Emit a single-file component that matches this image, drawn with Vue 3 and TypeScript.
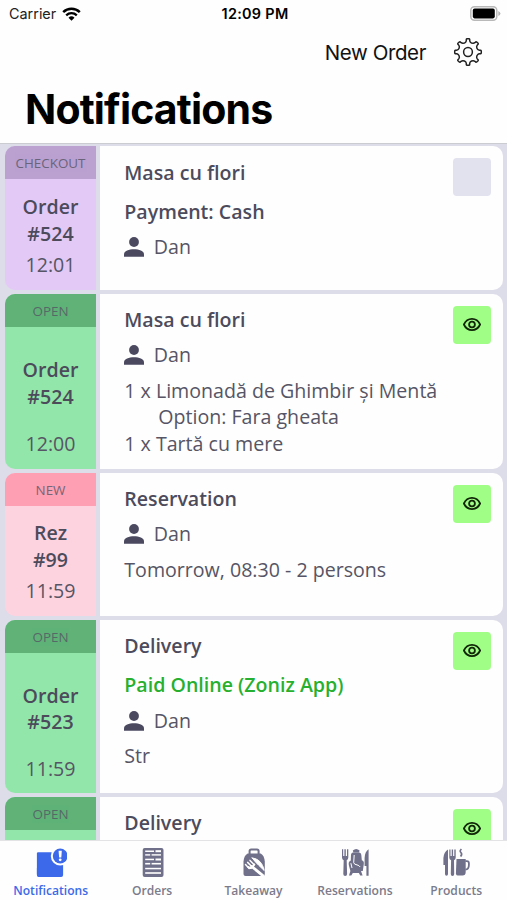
<script setup lang="ts">
interface Line {
  text: string
  indent?: boolean
}
interface Card {
  tone: 'checkout' | 'open' | 'new'
  tag: string
  kind?: string
  number?: string
  time?: string
  title: string
  note?: string
  paid?: boolean
  person?: string
  lines: Line[]
  seen: boolean
  size: 'short' | 'tall'
}

const cards: Card[] = [
  { tone: 'checkout', tag: 'CHECKOUT', kind: 'Order', number: '#524', time: '12:01', title: 'Masa cu flori', note: 'Payment: Cash', person: 'Dan', lines: [], seen: true, size: 'short' },
  {
    tone: 'open', tag: 'OPEN', kind: 'Order', number: '#524', time: '12:00', title: 'Masa cu flori', person: 'Dan',
    lines: [{ text: '1 x Limonadă de Ghimbir și Mentă' }, { text: 'Option: Fara gheata', indent: true }, { text: '1 x Tartă cu mere' }],
    seen: false, size: 'tall',
  },
  { tone: 'new', tag: 'NEW', kind: 'Rez', number: '#99', time: '11:59', title: 'Reservation', person: 'Dan', lines: [{ text: 'Tomorrow, 08:30 - 2 persons' }], seen: false, size: 'short' },
  { tone: 'open', tag: 'OPEN', kind: 'Order', number: '#523', time: '11:59', title: 'Delivery', note: 'Paid Online (Zoniz App)', paid: true, person: 'Dan', lines: [{ text: 'Str' }], seen: false, size: 'tall' },
  { tone: 'open', tag: 'OPEN', title: 'Delivery', lines: [], seen: false, size: 'tall' },
]

const tabs: string[] = ['Notifications', 'Orders', 'Takeaway', 'Reservations', 'Products']

function gearPath(): string {
  const at = (r: number, deg: number): string => {
    const a = ((deg - 90) * Math.PI) / 180
    return `${(15 + r * Math.cos(a)).toFixed(2)} ${(15 + r * Math.sin(a)).toFixed(2)}`
  }
  let d = `M${at(10.1, -14)}`
  for (let i = 0; i < 8; i++) {
    const c = i * 45
    d += `Q${at(10.6, c - 10)} ${at(11.6, c - 8.5)}L${at(12.8, c - 7.5)}Q${at(13.3, c - 6.5)} ${at(13.3, c - 4)}`
    d += `L${at(13.3, c + 4)}Q${at(13.3, c + 6.5)} ${at(12.8, c + 7.5)}L${at(11.6, c + 8.5)}Q${at(10.6, c + 10)} ${at(10.1, c + 14)}`
    d += `Q${at(9.3, c + 22.5)} ${at(10.1, c + 31)}`
  }
  return d + 'Z'
}
const gear = gearPath()
</script>

<template>
  <div class="screen">
    <header class="top">
      <div class="status">
        <div class="carrier">
          <span>Carrier</span>
          <svg class="wifi" viewBox="0 0 19 14" fill="none">
            <path d="M1.2 5.2A12 12 0 0 1 17.8 5.2" stroke="#000" stroke-width="2.5" />
            <path d="M4.2 8.3A7.7 7.7 0 0 1 14.8 8.3" stroke="#000" stroke-width="2.3" />
            <path d="M9.5 13.8L6.5 10.8A4.3 4.3 0 0 1 12.5 10.8Z" fill="#000" />
          </svg>
        </div>
        <span class="clock">12:09 PM</span>
        <svg class="battery" viewBox="0 0 31 15">
          <rect x="0.8" y="0.8" width="26" height="13.4" rx="3.6" fill="#fff" stroke="#b9b9b9" stroke-width="1.5" />
          <rect x="2.8" y="2.6" width="22" height="9.8" rx="1.8" />
          <path d="M28.3 5Q30.4 6 30.4 7.5T28.3 10Z" fill="#b4b4b4" />
        </svg>
      </div>
      <div class="actions">
        <span class="new-order">New Order</span>
        <svg class="gear" viewBox="0 0 30 30" fill="none" stroke="#222" stroke-width="1.5" stroke-linejoin="round">
          <path :d="gear" />
          <circle cx="15" cy="15" r="4.4" />
        </svg>
      </div>
      <h1>Notifications</h1>
    </header>

    <main class="list">
      <article v-for="(card, i) in cards" :key="i" class="card" :class="[card.tone, card.size]">
        <div class="side">
          <div class="tag"><span>{{ card.tag }}</span></div>
          <div v-if="card.kind" class="ident">
            <span>{{ card.kind }}</span>
            <span>{{ card.number }}</span>
          </div>
          <div v-if="card.time" class="time">{{ card.time }}</div>
        </div>
        <div class="body">
          <div class="text">
            <div class="title">{{ card.title }}</div>
            <div v-if="card.note" class="note" :class="{ paid: card.paid }">{{ card.note }}</div>
            <div v-if="card.person" class="person">
              <svg viewBox="0 0 20 20"><circle cx="10" cy="5" r="4.9" /><path d="M0 19.8V17.3C0 14 5 12.3 10 12.3S20 14 20 17.3V19.8Z" /></svg>
              <span>{{ card.person }}</span>
            </div>
            <div v-if="card.lines.length" class="lines">
              <div v-for="line in card.lines" :key="line.text" :class="{ indent: line.indent }">{{ line.text }}</div>
            </div>
          </div>
          <div class="mark" :class="{ seen: card.seen }">
            <svg v-if="!card.seen" viewBox="0 0 18 13" fill="none" stroke="#122608" stroke-width="1.8">
              <path d="M0.9 6.5C2.6 2.8 5.6 0.9 9 0.9S15.4 2.8 17.1 6.5C15.4 10.2 12.4 12.1 9 12.1S2.6 10.2 0.9 6.5Z" />
              <circle cx="9" cy="6.5" r="2.9" />
            </svg>
          </div>
        </div>
      </article>
    </main>

    <nav class="tabs">
      <div v-for="(tab, i) in tabs" :key="tab" class="tab" :class="{ active: i === 0 }">
        <svg v-if="i === 0" viewBox="-0.5 0 32 30">
          <path d="M2.6 4.2H22V28H3.2Q1.4 28 1.4 26V5.6Q1.4 4.2 2.6 4.2Z" fill="currentColor" />
          <path d="M20 4.8H27.6V27Q27.6 28.9 25.6 28.9H3Q1.4 28.9 1.4 27V20H20Z" fill="currentColor" />
          <circle cx="24.7" cy="8" r="9.4" fill="#fff" />
          <circle cx="24.7" cy="8" r="7.4" fill="currentColor" />
          <path d="M23.1 2.8H26.3L25.8 9.4H23.6Z" fill="#fff" />
          <circle cx="24.7" cy="11.8" r="1.4" fill="#fff" />
        </svg>
        <svg v-else-if="i === 1" viewBox="-1 0 32 30">
          <rect x="5.7" y="0" width="20.8" height="29" rx="2" fill="currentColor" />
          <g fill="#fff">
            <rect x="8.2" y="2.5" width="8.8" height="1.5" /><rect x="18.5" y="2.2" width="5.5" height="2" />
            <rect x="8.2" y="6.2" width="5" height="1.4" /><rect x="14.6" y="6.2" width="9.4" height="1.4" />
            <rect x="8.2" y="10.7" width="8.8" height="1.5" /><rect x="18.5" y="10.5" width="5.5" height="2" />
            <rect x="8.2" y="14.9" width="5" height="1.6" /><rect x="14.6" y="14.9" width="9.4" height="1.6" />
            <rect x="8.2" y="19.8" width="15.8" height="1.5" />
            <rect x="8.2" y="24.2" width="15.8" height="1.6" />
          </g>
        </svg>
        <svg v-else-if="i === 2" viewBox="-1.2 0 32 30">
          <path d="M11.4 7V3Q11.4 1.5 13 1.5H18.8Q20.4 1.5 20.4 3V7" fill="none" stroke="currentColor" stroke-width="2" />
          <path d="M9.5 5.5H22.5C25.4 7.6 26.2 9.7 26.6 13.5V26Q26.6 28 24.6 28H7.3Q5.3 28 5.3 26V13.5C5.7 9.7 6.5 7.6 9.5 5.5Z" fill="currentColor" />
          <g fill="none" stroke="#fff" stroke-linecap="round">
            <path d="M14 10C20 10.5 24.5 15 26 22.5L20.5 17.3Q17.5 14.5 14 10Z" fill="#fff" stroke-width="1" />
            <path d="M13.5 18.5L24.4 27.4" stroke-width="2.8" />
            <path d="M7.3 16.6L11 20.5M9.4 14.4L13.3 18.2M11.8 12.4L15.5 16.2" stroke-width="1.5" />
            <path d="M10.2 19.2Q13.5 21.4 16 16.6" stroke-width="2.2" />
          </g>
        </svg>
        <svg v-else-if="i === 3" viewBox="0 0 32 30">
          <g fill="currentColor">
            <path d="M3 1.2H4.2V8H5.4V1.2H6.8V8H8V1.2H9.3V9.5Q9.3 11.5 7.7 12.3L8.1 26Q8.1 28 6.2 28T4.3 26L4.7 12.3Q3 11.5 3 9.5Z" />
            <path d="M29.6 1.2V27.7H27.4V18H25.6V10Q25.9 3.5 29.6 1.2Z" />
            <path d="M13.8 2.6Q17.2 -0.4 20.6 2.6L20 4.5H14.4Z" />
            <path d="M13.8 4.4H20.2Q22.2 4.6 22.3 6.8L22.8 12.2Q25.2 12.8 24.8 16L23.8 22.9H22L23.6 27.4H21.2L19.9 25H13.8L12.3 27.4H10L11.4 22.9L9.8 17Q9.2 13.6 11.8 12.6L12 6.8Q12.2 4.6 13.8 4.4Z" />
          </g>
          <path d="M15.2 7L14.7 14.6Q15.1 16.6 18 16.9Q20.2 17.3 21.2 19M11.9 15.2L13 20" fill="none" stroke="#fff" stroke-width="1" />
        </svg>
        <svg v-else viewBox="-0.7 0 32 30">
          <g fill="currentColor">
            <path d="M7.3 1.4V26Q7.3 27.8 5.8 27.8T4.3 26V17H2.7V10Q3 4 7.3 1.4Z" />
            <path d="M8.6 1.4H9.8V8H11V1.4H12.4V8H13.6V1.4H15V9.5Q15 11.5 13.3 12.2L13.5 26Q13.5 28 11.8 28T10.1 26L10.4 12.2Q8.6 11.5 8.6 9.5Z" />
            <path d="M15.8 11H25V24Q25 27.6 21.8 27.6H17.2Q15.8 27.6 15.2 26Z" />
          </g>
          <g fill="none" stroke="currentColor">
            <path d="M24.6 13.2H26.2Q28.2 13.2 28.2 15.3V17Q28.2 21.3 24.7 21.7" stroke-width="1.8" />
            <path d="M20.7 1Q18.6 3 20.2 4.5T19.9 8.5" stroke-width="1.7" />
          </g>
        </svg>
        <span>{{ tab }}</span>
      </div>
    </nav>
  </div>
</template>

<style>
body {
  margin: 0;
  background: #fff;
}
</style>

<style scoped>
.screen {
  display: flex;
  flex-direction: column;
  width: 507px;
  height: 900px;
  overflow: hidden;
  background: #fefefe;
  font-family: 'Open Sans', 'Noto Sans', sans-serif;
  color: #565565;
}
.top {
  flex: none;
  box-sizing: border-box;
  height: 142.8px;
  font-family: Inter, 'Liberation Sans', sans-serif;
  color: #000;
}
.status {
  display: grid;
  grid-template-columns: 1fr auto 1fr;
  align-items: center;
  height: 27px;
  padding: 0 6px 0 9px;
  font-size: 14.4px;
}
.carrier {
  display: flex;
  align-items: center;
  gap: 6px;
  color: #222;
}
.wifi {
  width: 19px;
  height: 14px;
}
.clock {
  font-weight: 600;
  letter-spacing: 0.3px;
}
.battery {
  justify-self: end;
  width: 31px;
  height: 15px;
}
.actions {
  display: flex;
  justify-content: flex-end;
  align-items: center;
  gap: 27px;
  height: 50px;
  padding-right: 24px;
}
.new-order {
  font-size: 20.5px;
  letter-spacing: -0.4px;
  color: #111;
}
.gear {
  width: 30px;
  height: 30px;
}
h1 {
  margin: 0;
  padding: 7px 0 0 25px;
  font-size: 41px;
  line-height: 50px;
  font-weight: 700;
  letter-spacing: -0.85px;
}
.list {
  flex: 1;
  min-height: 0;
  overflow: hidden;
  display: flex;
  flex-direction: column;
  gap: 3.7px;
  padding: 2.5px 4px 0 5px;
  border-top: 1px solid #cbcbd2;
  background: #dddce9;
}
.card {
  flex: none;
  display: flex;
  gap: 4px;
  border-radius: 10px;
  overflow: hidden;
}
.short {
  height: 143.6px;
}
.tall {
  height: 175.3px;
}
.tall:nth-child(4) {
  height: 173.6px;
}
.side {
  flex: none;
  display: flex;
  flex-direction: column;
  width: 91px;
  text-align: center;
  font-size: 19.6px;
  line-height: 26.5px;
}
.tag {
  height: 33px;
  font-size: 13.4px;
  line-height: 34px;
}
.tag span {
  opacity: 0.8;
}
.ident {
  flex: 1;
  display: flex;
  flex-direction: column;
  justify-content: center;
  padding-top: 9.5px;
  font-weight: 600;
  color: #4c4b5c;
}
.time {
  padding-bottom: 11.2px;
}
.checkout .side {
  background: #e3caf6;
}
.checkout .tag {
  background: #baa1d0;
}
.open .side {
  background: #93e6a9;
}
.open .tag {
  background: #60b277;
}
.new .side {
  background: #fed3e0;
}
.new .tag {
  background: #fe9fb4;
}
.body {
  flex: 1;
  display: flex;
  justify-content: space-between;
  align-items: flex-start;
  padding: 12.1px 12px 0 24.3px;
  background: #fefefe;
}
.text {
  padding-top: 1.2px;
  font-size: 19.6px;
  line-height: 26.5px;
  white-space: nowrap;
}
.title,
.note {
  font-weight: 600;
  color: #4c4b5c;
}
.note {
  margin-top: 12.8px;
}
.note.paid {
  color: #27b02f;
}
.person {
  display: flex;
  align-items: center;
  gap: 9.5px;
  margin-top: 8.8px;
}
.person svg {
  width: 20px;
  height: 20px;
  fill: #4a4960;
}
.lines {
  margin-top: 9.2px;
}
.indent {
  padding-left: 34px;
}
.mark {
  flex: none;
  display: flex;
  align-items: center;
  justify-content: center;
  width: 38px;
  height: 38px;
  border-radius: 4px;
  background: #a0fd86;
}
.mark.seen {
  background: #e1e2ee;
}
.mark svg {
  width: 18px;
  height: 13px;
}
.tabs {
  flex: none;
  box-sizing: border-box;
  display: grid;
  grid-template-columns: repeat(5, 1fr);
  height: 60px;
  border-top: 1px solid #e3e3e6;
  background: #fefefe;
  color: #70708a;
}
.tab {
  display: flex;
  flex-direction: column;
  align-items: center;
  padding-top: 7px;
  font-size: 12.1px;
  line-height: 16px;
  font-weight: 600;
}
.tab svg {
  width: 32px;
  height: 30px;
  margin-bottom: 5px;
}
.tab span {
  color: #7b7b8b;
}
.active,
.tab.active span {
  color: #3b69ea;
}
</style>
